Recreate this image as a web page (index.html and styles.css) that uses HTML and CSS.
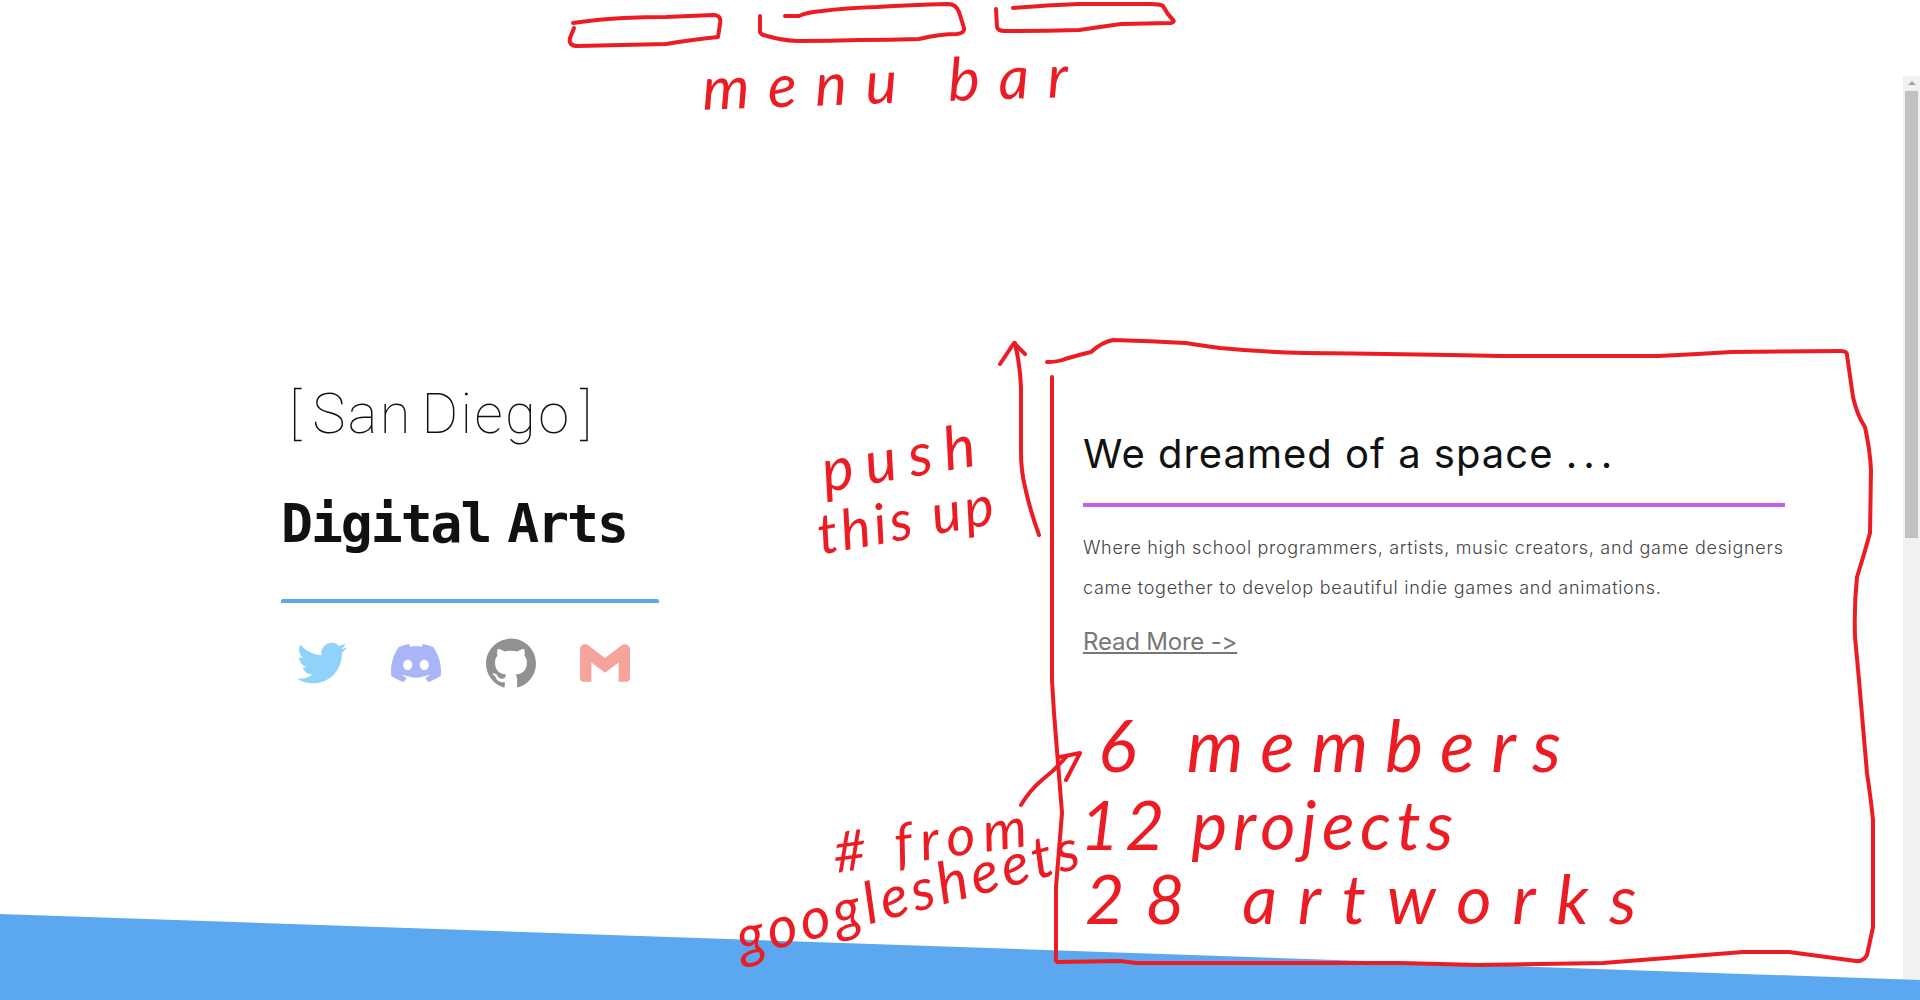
FILE: index.html
```html
<!DOCTYPE html>
<html lang="en">
<head>
    <meta charset="UTF-8">
    <title>San Diego Digital Arts</title>
    <link rel="stylesheet" href="styles.css">
</head>
<body>
    <div class="page">
        <main class="hero">
            <section class="intro">
                <p class="city">[ San Diego ]</p>
                <h1 class="club">Digital Arts</h1>
                <div class="socials">
                    <a class="social twitter" href="#" aria-label="Twitter">
                        <svg viewBox="0 0 24 24"><path d="M23.953 4.57a10 10 0 01-2.825.775 4.958 4.958 0 002.163-2.723c-.951.555-2.005.959-3.127 1.184a4.92 4.92 0 00-8.384 4.482C7.69 8.095 4.067 6.13 1.64 3.162a4.822 4.822 0 00-.666 2.475c0 1.71.87 3.213 2.188 4.096a4.904 4.904 0 01-2.228-.616v.06a4.923 4.923 0 003.946 4.827 4.996 4.996 0 01-2.212.085 4.936 4.936 0 004.604 3.417 9.867 9.867 0 01-6.102 2.105c-.39 0-.779-.023-1.17-.067a13.995 13.995 0 007.557 2.209c9.053 0 13.998-7.496 13.998-13.985 0-.21 0-.42-.015-.63A9.935 9.935 0 0024 4.59z"/></svg>
                    </a>
                    <a class="social discord" href="#" aria-label="Discord">
                        <svg viewBox="0 0 24 24"><path d="M20.317 4.3698a19.7913 19.7913 0 00-4.8851-1.5152.0741.0741 0 00-.0785.0371c-.211.3753-.4447.8648-.6083 1.2495-1.8447-.2762-3.68-.2762-5.4868 0-.1636-.3933-.4058-.8742-.6177-1.2495a.077.077 0 00-.0785-.037 19.7363 19.7363 0 00-4.8852 1.515.0699.0699 0 00-.0321.0277C.5334 9.0458-.319 13.5799.0992 18.0578a.0824.0824 0 00.0312.0561c2.0528 1.5076 4.0413 2.4228 5.9929 3.0294a.0777.0777 0 00.0842-.0276c.4616-.6304.8731-1.2952 1.226-1.9942a.076.076 0 00-.0416-.1057c-.6528-.2476-1.2743-.5495-1.8722-.8923a.077.077 0 01-.0076-.1277c.1258-.0943.2517-.1923.3718-.2914a.0743.0743 0 01.0776-.0105c3.9278 1.7933 8.18 1.7933 12.0614 0a.0739.0739 0 01.0785.0095c.1202.099.246.1981.3728.2924a.077.077 0 01-.0066.1276 12.2986 12.2986 0 01-1.873.8914.0766.0766 0 00-.0407.1067c.3604.698.7719 1.3628 1.225 1.9932a.076.076 0 00.0842.0286c1.961-.6067 3.9495-1.5219 6.0023-3.0294a.077.077 0 00.0313-.0552c.5004-5.177-.8382-9.6739-3.5485-13.6604a.061.061 0 00-.0312-.0286zM8.02 15.3312c-1.1825 0-2.1569-1.0857-2.1569-2.419 0-1.3332.9555-2.4189 2.157-2.4189 1.2108 0 2.1757 1.0952 2.1568 2.419 0 1.3332-.9555 2.4189-2.1569 2.4189zm7.9748 0c-1.1825 0-2.1569-1.0857-2.1569-2.419 0-1.3332.9554-2.4189 2.1569-2.4189 1.2108 0 2.1757 1.0952 2.1568 2.419 0 1.3332-.946 2.4189-2.1568 2.4189Z"/></svg>
                    </a>
                    <a class="social github" href="#" aria-label="GitHub">
                        <svg viewBox="0 0 24 24"><path d="M12 .297c-6.63 0-12 5.373-12 12 0 5.303 3.438 9.8 8.205 11.385.6.113.82-.258.82-.577 0-.285-.01-1.04-.015-2.04-3.338.724-4.042-1.61-4.042-1.61C4.422 18.07 3.633 17.7 3.633 17.7c-1.087-.744.084-.729.084-.729 1.205.084 1.838 1.236 1.838 1.236 1.07 1.835 2.809 1.305 3.495.998.108-.776.417-1.305.76-1.605-2.665-.3-5.466-1.332-5.466-5.93 0-1.31.465-2.38 1.235-3.22-.135-.303-.54-1.523.105-3.176 0 0 1.005-.322 3.3 1.23.96-.267 1.98-.399 3-.405 1.02.006 2.04.138 3 .405 2.28-1.552 3.285-1.23 3.285-1.23.645 1.653.24 2.873.12 3.176.765.84 1.23 1.91 1.23 3.22 0 4.61-2.805 5.625-5.475 5.92.42.36.81 1.096.81 2.22 0 1.606-.015 2.896-.015 3.286 0 .315.21.69.825.57C20.565 22.092 24 17.592 24 12.297c0-6.627-5.373-12-12-12"/></svg>
                    </a>
                    <a class="social gmail" href="#" aria-label="Gmail">
                        <svg viewBox="0 0 24 24"><path d="M24 5.457v13.909c0 .904-.732 1.636-1.636 1.636h-3.819V11.73L12 16.64l-6.545-4.91v9.273H1.636A1.636 1.636 0 0 1 0 19.366V5.457c0-2.023 2.309-3.178 3.927-1.964L5.455 4.64 12 9.548l6.545-4.91 1.528-1.145C21.69 2.28 24 3.434 24 5.457z"/></svg>
                    </a>
                </div>
            </section>
            <section class="about">
                <h2 class="about-title">We dreamed of a space <span class="dots">...</span></h2>
                <p class="about-text">Where high school programmers, artists, music creators, and game designers came together to develop beautiful indie games and animations.</p>
                <a class="read-more" href="#">Read More -&gt;</a>
            </section>
        </main>
        <div class="wedge"></div>
        <div class="scrollbar">
            <div class="scroll-arrow"></div>
            <div class="scroll-thumb"></div>
        </div>

        <!-- red pen notes over the screenshot -->
        <div class="notes">
            <svg class="ink" viewBox="0 0 1920 1000">
                <path d="M573 23 Q600 19 624 18 Q645 17 666 17 Q690 16 713 15 Q722 15 720 24 L718 37 Q690 40 666 44 Q620 45 578 46 Q568 46 570 38 L574 28"/>
                <path d="M760 16 L760 32 Q761 35 767 36 Q780 40 797 41 Q830 41 860 40 Q890 40 919 39 Q940 34 957 34 Q965 33 964 28 L959 12 Q956 4 948 4 Q910 5 877 7 Q845 8 822 11 Q808 12 799 16 L785 16"/>
                <path d="M996 9 L997 27 Q998 31 1005 31 Q1040 31 1079 30 Q1100 27 1121 24 L1171 23 Q1175 22 1173 20 Q1167 14 1163 6 Q1160 4 1150 4 L1079 4 Q1045 5 1013 8"/>
                <path d="M1039 535 Q1030 510 1025 487 Q1021 470 1021 453 L1021 387 Q1020 365 1015 343"/>
                <path d="M1000 364 L1014 343 L1025 354"/>
                <path d="M1047 362 Q1058 362 1065 359 Q1082 354 1091 352 Q1102 342 1113 340 Q1150 341 1186 343 Q1205 346 1220 348 Q1262 352 1304 353 Q1400 354 1501 356 L1658 356 Q1700 354 1731 352 L1841 351 Q1847 351 1847 355 L1853 397 Q1857 415 1865 427 Q1870 450 1871 470 L1870 533 Q1864 555 1857 577 Q1854 605 1855 637 L1859 680 L1867 773 Q1871 800 1873 820 L1873 927 L1867 955 Q1863 962 1856 961 L1789 952 L1743 952 Q1670 958 1603 963 L1478 965 L1400 963 L1136 963 L1120 961 L1058 962 Q1055 961 1056 957 L1056 887 L1062 813 L1054 713 L1052 680 L1052 377"/>
                <path d="M1021 805 Q1030 790 1042 780 Q1055 770 1066 757"/>
                <path d="M1060 757 L1080 753 L1066 780"/>
            </svg>
            <span class="hand menu-note">menu bar</span>
            <span class="hand push-note">push</span>
            <span class="hand this-note">this up</span>
            <span class="hand members-note">6 members</span>
            <span class="hand projects-note">12 projects</span>
            <span class="hand artworks-note">28 artworks</span>
            <span class="hand from-note"># from</span>
            <span class="hand sheets-note">googlesheets</span>
        </div>
    </div>
</body>
</html>
```

FILE: styles.css
```css
* {
    box-sizing: border-box;
}

body {
    margin: 0;
    background-color: #fff;
    overflow: hidden;
}

.page {
    position: relative;
    display: flex;
    flex-direction: column;
    height: 1000px;
    overflow: hidden;
}

.hero {
    flex: 1;
    display: flex;
    justify-content: space-between;
    padding: 0 135px 0 281px;
}

/* left column */
.intro {
    width: 378px;
    padding-top: 378px;
}

.city {
    margin: 0 0 0 8px;
    font-family: Roboto, sans-serif;
    font-weight: 100;
    font-size: 56px;
    line-height: 72px;
    letter-spacing: 2.4px;
    word-spacing: -7px;
    color: #111;
}

.club {
    margin: 42px 0 0;
    font-family: "DejaVu Sans Mono", monospace;
    font-weight: 700;
    font-size: 53px;
    line-height: 64px;
    letter-spacing: -2px;
    word-spacing: -13px;
    color: #111;
}

.socials {
    display: flex;
    gap: 44.4px;
    align-items: center;
    margin-top: 43px;
    padding: 35px 0 0 16px;
    border-top: 4px solid #5ca8f0;
    border-radius: 2px;
}

.social {
    display: block;
    width: 50px;
    height: 50px;
}

.social svg {
    display: block;
    width: 100%;
    height: 100%;
}

.twitter { fill: #90d2fa; }
.discord { fill: #aab5f8; }
.github { fill: #919191; }
.gmail { fill: #f6a39c; }

/* right column */
.about {
    width: 702px;
    padding-top: 428px;
}

.about-title {
    margin: 0;
    padding-bottom: 23px;
    font-family: Inter, sans-serif;
    font-weight: 400;
    font-size: 40px;
    line-height: 52px;
    letter-spacing: 1px;
    color: #111;
    border-bottom: 4px solid #c45ff0;
}

.dots {
    letter-spacing: 6px;
}

.about-text {
    margin: 21px 0 0;
    font-family: Inter, sans-serif;
    font-weight: 300;
    font-size: 18px;
    line-height: 40px;
    letter-spacing: 0.7px;
    color: #444;
}

.read-more {
    display: inline-block;
    margin-top: 18px;
    font-family: Inter, sans-serif;
    font-size: 24px;
    line-height: 32px;
    letter-spacing: -0.2px;
    font-variant-ligatures: none;
    font-feature-settings: "calt" 0;
    color: #777;
}

.wedge {
    position: relative;
    z-index: 2;
    height: 86px;
    background-color: #5ca8f0;
    clip-path: polygon(0 0, 100% 66px, 100% 100%, 0 100%);
}

/* browser scrollbar */
.scrollbar {
    position: absolute;
    top: 76px;
    right: 0;
    bottom: 0;
    z-index: 1;
    width: 17px;
    background-color: #f1f1f1;
}

.scroll-arrow {
    width: 0;
    margin: 5px auto 0;
    border-left: 4px solid transparent;
    border-right: 4px solid transparent;
    border-bottom: 4px solid #a3a3a3;
}

.scroll-thumb {
    width: 13px;
    height: 447px;
    margin: 6px auto 0;
    background-color: #c1c1c1;
}

/* pen notes */
.notes {
    position: absolute;
    inset: 0;
    z-index: 3;
}

.ink {
    position: absolute;
    top: 0;
    left: 0;
    width: 1920px;
    height: 1000px;
    fill: none;
    stroke: #ec1c24;
    stroke-width: 4;
    stroke-linecap: round;
    stroke-linejoin: round;
}

.hand {
    position: absolute;
    font-family: Lato, sans-serif;
    font-style: italic;
    font-size: 60px;
    line-height: 1;
    white-space: nowrap;
    color: #ec1c24;
}

.menu-note {
    top: 50px;
    left: 702px;
    letter-spacing: 18.5px;
    transform: rotate(-2deg);
}

.push-note {
    top: 425px;
    left: 820px;
    letter-spacing: 12px;
    transform: rotate(-10deg);
}

.this-note {
    top: 490px;
    left: 816px;
    font-size: 56px;
    letter-spacing: 3.5px;
    transform: rotate(-10deg);
}

.members-note {
    top: 708px;
    left: 1098px;
    font-size: 72px;
    letter-spacing: 16.8px;
}

.projects-note {
    top: 790px;
    left: 1080px;
    font-size: 68px;
    letter-spacing: 5.5px;
}

.artworks-note {
    top: 864px;
    left: 1085px;
    font-size: 68px;
    letter-spacing: 20.8px;
}

.from-note {
    top: 810px;
    left: 832px;
    font-size: 56px;
    letter-spacing: 8px;
    transform: rotate(-8deg);
}

.sheets-note {
    top: 862px;
    left: 730px;
    font-size: 58px;
    letter-spacing: 4px;
    transform: rotate(-15deg);
}
```
